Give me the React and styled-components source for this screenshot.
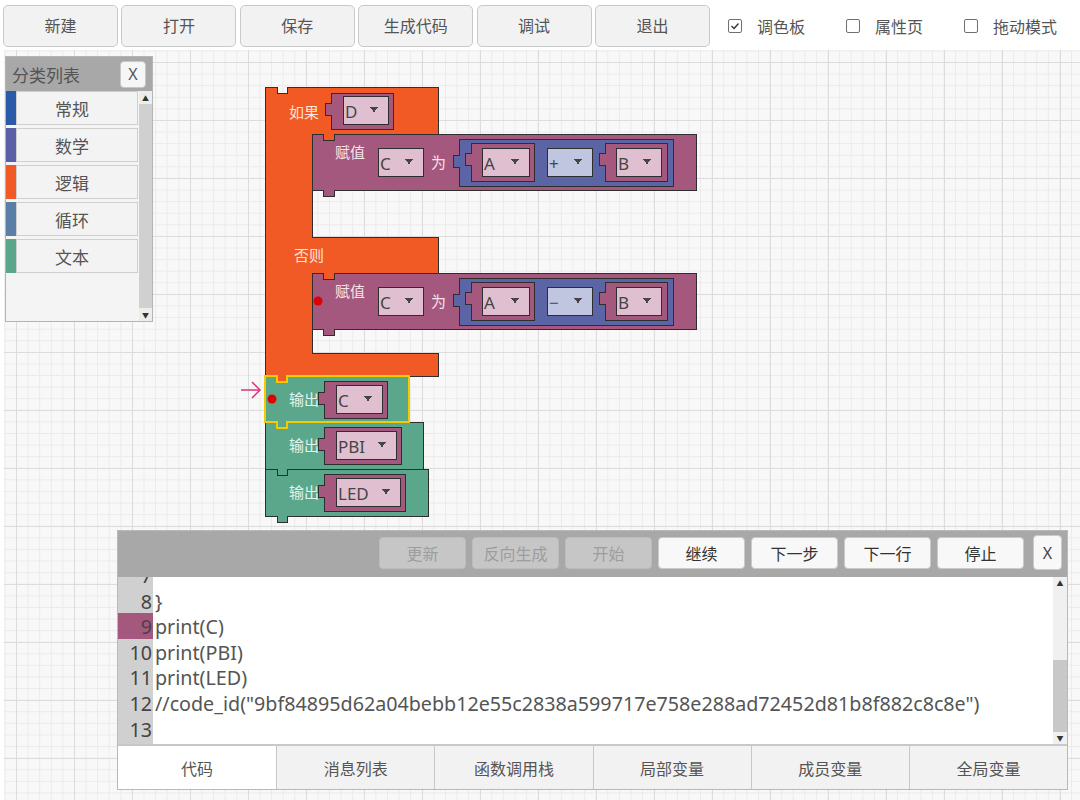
import React from 'react';
import styled, { createGlobalStyle } from 'styled-components';

const tools = ['新建', '打开', '保存', '生成代码', '调试', '退出'];

const toggles = [
  { label: '调色板', checked: true },
  { label: '属性页', checked: false },
  { label: '拖动模式', checked: false },
];

const categories = [
  { name: '常规', color: '#2b5aa8' },
  { name: '数学', color: '#5b5fa5' },
  { name: '逻辑', color: '#f15a24' },
  { name: '循环', color: '#5a7fa6' },
  { name: '文本', color: '#5ba68b' },
];

const debugButtons = [
  { label: '更新', disabled: true },
  { label: '反向生成', disabled: true },
  { label: '开始', disabled: true },
  { label: '继续' },
  { label: '下一步' },
  { label: '下一行' },
  { label: '停止' },
];

const codeLines = [
  { n: 7, text: '' },
  { n: 8, text: '}' },
  { n: 9, text: 'print(C)', current: true },
  { n: 10, text: 'print(PBI)' },
  { n: 11, text: 'print(LED)' },
  { n: 12, text: '//code_id("9bf84895d62a04bebb12e55c2838a599717e758e288ad72452d81b8f882c8c8e")' },
  { n: 13, text: '' },
];

const tabs = ['代码', '消息列表', '函数调用栈', '局部变量', '成员变量', '全局变量'];

const color = {
  logic: '#f15a24',
  variable: '#a5587d',
  math: '#5b65a5',
  text: '#5ba78b',
  field: '#e0c0d0',
  opField: '#c0c5e0',
  line: '#2e2e2e',
};

// block outlines (page coordinates)
const stmt = (x, y, w, h, n = 12) =>
  `M${x} ${y}H${x + n}V${y + 6}H${x + 22}V${y}H${x + w}V${y + h}H${x + 22}V${y + h + 6}H${x + n}V${y + h}H${x}Z`;

const value = (x, y, w, h, t) =>
  `M${x} ${y}H${x + w}V${y + h}H${x}V${y + t + 12}H${x - 6}V${y + t}H${x}Z`;

const ifPath =
  'M265 87H277V93H287V87H438V134H334V140H323V134H312V237H438V273H334V279H323V273H312V353H438V376H287V382H277V376H265Z';

const Dot = ({ x, y }) => (
  <circle cx={x} cy={y} r={4.5} fill="#e00000" stroke="none" shapeRendering="geometricPrecision" />
);

const Field = ({ x, y, w, label, fill = color.field }) => (
  <g>
    <rect x={x} y={y} width={w} height={28} fill={fill} stroke={color.line} />
    <FieldText x={x + 2} y={y + 15}>{label}</FieldText>
    <path d={`M${x + w - 18} ${y + 11}h8l-4 5.5z`} fill="#454545" stroke="none" />
  </g>
);

const Assign = ({ y, op, dot }) => (
  <g>
    <path d={stmt(312, y, 384, 56, 11)} fill={color.variable} stroke={color.line} />
    {dot && <Dot x={318} y={y + 28} />}
    <Label x={335} y={y + 18} fill="#f5e2ec">赋值</Label>
    <Field x={378} y={y + 14} w={45} label="C" />
    <Label x={431} y={y + 28} fill="#f5e2ec">为</Label>
    <path d={value(459, y + 5, 214, 47, 16)} fill={color.math} stroke={color.line} />
    <path d={value(471, y + 9, 63, 38, 10)} fill={color.variable} stroke={color.line} />
    <Field x={482} y={y + 14} w={47} label="A" />
    <Field x={547} y={y + 14} w={45} label={op} fill={color.opField} />
    <path d={value(605, y + 9, 62, 38, 10)} fill={color.variable} stroke={color.line} />
    <Field x={616} y={y + 14} w={45} label="B" />
  </g>
);

const Output = ({ y, w, h, sw, label, selected }) => (
  <g>
    <path
      d={stmt(265, y, w, h)}
      fill={color.text}
      stroke={selected ? '#f2cc00' : color.line}
      strokeWidth={selected ? 2 : 1}
    />
    {selected && <Dot x={272} y={y + 23} />}
    <Label x={289} y={y + 23} fill="#e4f3ec">输出</Label>
    <path d={value(324, y + 5, sw, 37, 11)} fill={color.variable} stroke={color.line} />
    <Field x={336} y={y + 9} w={sw - 17} label={label} />
  </g>
);

const Blocks = () => (
  <BlockCanvas width="480" height="450" viewBox="230 80 480 450" shapeRendering="crispEdges">
    <path d={ifPath} fill={color.logic} stroke={color.line} />
    <Label x={289} y={112} fill="#fce4da">如果</Label>
    <Label x={294} y={255} fill="#fce4da">否则</Label>
    <path d={value(331, 93, 62, 36, 10)} fill={color.variable} stroke={color.line} />
    <Field x={343} y={96} w={45} label="D" />
    <Assign y={134} op="+" />
    <Assign y={273} op="−" dot />
    <Output y={422} w={158} h={47} sw={77} label="PBI" />
    <Output y={469} w={163} h={47} sw={81} label="LED" />
    <Output y={376} w={144} h={46} sw={63} label="C" selected />
    <g fill="none" stroke="#e0307a" strokeWidth="1.5" shapeRendering="geometricPrecision">
      <path d="M241 390H260" />
      <path d="M252 382L260 390L252 398" />
    </g>
  </BlockCanvas>
);

const App = () => (
  <Page>
    <GlobalStyle />
    <Toolbar>
      {tools.map(t => (
        <ToolButton key={t}>{t}</ToolButton>
      ))}
      <Toggles>
        {toggles.map(({ label, checked }) => (
          <Toggle key={label}>
            <CheckBox>
              {checked && (
                <svg width="10" height="10" viewBox="0 0 10 10">
                  <path d="M1.5 5l2.5 2.5L8.5 2.5" fill="none" stroke="#333" strokeWidth="1.4" />
                </svg>
              )}
            </CheckBox>
            {label}
          </Toggle>
        ))}
      </Toggles>
    </Toolbar>

    <Workspace>
      <Blocks />

      <Palette>
        <PaletteHeader>
          <PaletteTitle>分类列表</PaletteTitle>
          <CloseButton>X</CloseButton>
        </PaletteHeader>
        <PaletteBody>
          <CategoryList>
            {categories.map(({ name, color: c }) => (
              <CategoryRow key={name}>
                <Strip $color={c} />
                <CategoryButton>{name}</CategoryButton>
              </CategoryRow>
            ))}
          </CategoryList>
          <ScrollTrack>
            <ScrollArrow>▲</ScrollArrow>
            <ScrollArrow>▼</ScrollArrow>
          </ScrollTrack>
        </PaletteBody>
      </Palette>

      <DebugPanel>
        <DebugHeader>
          {debugButtons.map(({ label, disabled }) => (
            <DebugButton key={label} $disabled={disabled}>
              {label}
            </DebugButton>
          ))}
          <PanelClose>X</PanelClose>
        </DebugHeader>
        <CodeArea>
          <CodeBody>
            <CodeLines>
              {codeLines.map(({ n, text, current }) => (
                <CodeRow key={n}>
                  <LineNo $current={current}>{n}</LineNo>
                  <LineText>{text}</LineText>
                </CodeRow>
              ))}
            </CodeLines>
          </CodeBody>
          <VScroll>
            <VArrow>▲</VArrow>
            <VSpacer />
            <VThumb />
            <VArrow>▼</VArrow>
          </VScroll>
        </CodeArea>
        <TabBar>
          {tabs.map((t, i) => (
            <Tab key={t} $active={i === 0} $first={i === 0}>
              {t}
            </Tab>
          ))}
        </TabBar>
      </DebugPanel>
    </Workspace>
  </Page>
);

const GlobalStyle = createGlobalStyle`
  html, body {
    margin: 0;
    padding: 0;
    background: #fff;
  }
  body {
    font-family: 'Noto Sans', 'Noto Sans CJK SC', sans-serif;
    color: #555;
  }
`;

const cjk = `'Noto Sans', 'Noto Sans CJK SC', sans-serif`;

const Page = styled.div`
  width: 1080px;
  height: 800px;
  overflow: hidden;
  display: flex;
  flex-direction: column;
`;

const Toolbar = styled.div`
  flex: none;
  height: 50px;
  box-sizing: border-box;
  padding: 5px 0 0 3px;
  display: flex;
  align-items: flex-start;
`;

const ToolButton = styled.button`
  width: 115px;
  height: 42px;
  margin-right: 3.4px;
  padding: 0 0 2px;
  border: 1px solid #c9c9c9;
  border-radius: 5px;
  background: #f2f2f2;
  color: #555;
  font: 16px ${cjk};
`;

const Toggles = styled.div`
  display: flex;
  gap: 41px;
  margin-left: 14.6px;
  height: 42px;
  align-items: center;
`;

const Toggle = styled.label`
  display: flex;
  align-items: center;
  font: 16px ${cjk};
  color: #555;
`;

const CheckBox = styled.span`
  width: 14px;
  height: 14px;
  box-sizing: border-box;
  border: 1px solid #707070;
  border-radius: 2px;
  background: #fff;
  margin-right: 15px;
  display: grid;
  place-items: center;
`;

const Workspace = styled.div`
  position: relative;
  flex: 1;
  margin-left: 4px;
  overflow: hidden;
  background-color: #f8f8f8;
  background-image: linear-gradient(#dcdcdc 1px, transparent 1px),
    linear-gradient(90deg, #dcdcdc 1px, transparent 1px),
    linear-gradient(#ebebeb 1px, transparent 1px),
    linear-gradient(90deg, #ebebeb 1px, transparent 1px);
  background-size: 58px 58px, 58px 58px, 11.6px 11.6px, 11.6px 11.6px;
  background-position: 12px 12px;
`;

const BlockCanvas = styled.svg`
  position: absolute;
  left: 226px;
  top: 30px;
  overflow: visible;
`;

const Label = styled.text`
  font: 15px ${cjk};
  dominant-baseline: central;
`;

const FieldText = styled.text`
  font: 17px 'Noto Sans', sans-serif;
  fill: #454545;
  dominant-baseline: central;
`;

const Palette = styled.div`
  position: absolute;
  left: 1px;
  top: 6px;
  width: 148px;
  height: 266px;
  box-sizing: border-box;
  border: 1px solid #b4b4b4;
  background: #f4f4f4;
  display: flex;
  flex-direction: column;
`;

const PaletteHeader = styled.div`
  flex: none;
  height: 34px;
  background: #a8a8a8;
  display: flex;
  align-items: center;
  justify-content: space-between;
  padding: 0 6px;
`;

const PaletteTitle = styled.span`
  font: 17px ${cjk};
  color: #555;
`;

const CloseButton = styled.span`
  width: 26px;
  height: 27px;
  box-sizing: border-box;
  border: 1px solid #c8c8c8;
  border-radius: 4px;
  background: #f6f6f6;
  display: grid;
  place-items: center;
  font: 16px 'Noto Sans', sans-serif;
  color: #555;
`;

const PaletteBody = styled.div`
  flex: 1;
  min-height: 0;
  display: flex;
`;

const CategoryList = styled.div`
  flex: 1;
  display: flex;
  flex-direction: column;
  gap: 3px;
  padding-right: 1px;
`;

const CategoryRow = styled.div`
  display: flex;
  height: 34px;
`;

const Strip = styled.span`
  width: 10px;
  background: ${p => p.$color};
`;

const CategoryButton = styled.span`
  flex: 1;
  box-sizing: border-box;
  border: 1px solid #cfcfcf;
  background: #f3f3f3;
  display: flex;
  align-items: center;
  justify-content: center;
  padding-right: 10px;
  font: 17px ${cjk};
  color: #555;
`;

const ScrollTrack = styled.div`
  width: 13px;
  background: #d0d0d0;
  display: flex;
  flex-direction: column;
  justify-content: space-between;
`;

const ScrollArrow = styled.span`
  height: 13px;
  background: #ededed;
  display: grid;
  place-items: center;
  font-size: 7px;
  color: #333;
`;

const DebugPanel = styled.div`
  position: absolute;
  left: 113px;
  top: 480px;
  width: 951px;
  height: 260px;
  box-sizing: border-box;
  border: 1px solid #b9b9b9;
  background: #fff;
  display: flex;
  flex-direction: column;
`;

const DebugHeader = styled.div`
  flex: none;
  height: 46px;
  box-sizing: border-box;
  background: #a8a8a8;
  display: flex;
  justify-content: flex-end;
  align-items: flex-start;
  gap: 6px;
  padding: 6px 5px 0 0;
`;

const DebugButton = styled.span`
  width: 87px;
  height: 32px;
  box-sizing: border-box;
  border-radius: 4px;
  border: 1px solid ${p => (p.$disabled ? '#bcbcbc' : '#cacaca')};
  background: ${p => (p.$disabled ? '#c6c6c6' : '#f8f8f8')};
  color: ${p => (p.$disabled ? '#9d9d9d' : '#333')};
  display: flex;
  align-items: center;
  justify-content: center;
  font: 16px ${cjk};
`;

const PanelClose = styled.span`
  width: 29px;
  height: 35px;
  margin: -2px 0 0 3px;
  box-sizing: border-box;
  border: 1px solid #cacaca;
  border-radius: 4px;
  background: #f8f8f8;
  display: grid;
  place-items: center;
  font: 16px 'Noto Sans', sans-serif;
  color: #444;
`;

const CodeArea = styled.div`
  flex: none;
  height: 167px;
  display: flex;
`;

const CodeBody = styled.div`
  flex: 1;
  overflow: hidden;
  background: linear-gradient(90deg, #d0d0d0 35px, #fff 35px);
`;

const CodeLines = styled.div`
  margin-top: -15px;
`;

const CodeRow = styled.div`
  display: flex;
  height: 25.6px;
  line-height: 25.6px;
  font: 19.7px 'Noto Sans', sans-serif;
`;

const LineNo = styled.span`
  width: 35px;
  box-sizing: border-box;
  padding-right: 1px;
  text-align: right;
  color: #444;
  background: ${p => (p.$current ? '#a5587d' : 'transparent')};
`;

const LineText = styled.span`
  padding-left: 2px;
  white-space: pre;
  color: #555;
`;

const VScroll = styled.div`
  width: 14px;
  background: #f0f0f0;
  display: flex;
  flex-direction: column;
`;

const VArrow = styled.span`
  height: 12px;
  display: grid;
  place-items: center;
  font-size: 7px;
  color: #333;
`;

const VSpacer = styled.span`
  flex: 1;
`;

const VThumb = styled.span`
  height: 72px;
  background: #c8c8c8;
`;

const TabBar = styled.div`
  flex: 1;
  display: grid;
  grid-template-columns: repeat(6, 1fr);
  border-top: 2px solid #c8c8c8;
`;

const Tab = styled.span`
  display: flex;
  align-items: center;
  justify-content: center;
  font: 16px ${cjk};
  color: #555;
  background: ${p => (p.$active ? '#fff' : '#f2f2f2')};
  border-left: ${p => (p.$first ? 'none' : '1px solid #c8c8c8')};
`;

export default App;
